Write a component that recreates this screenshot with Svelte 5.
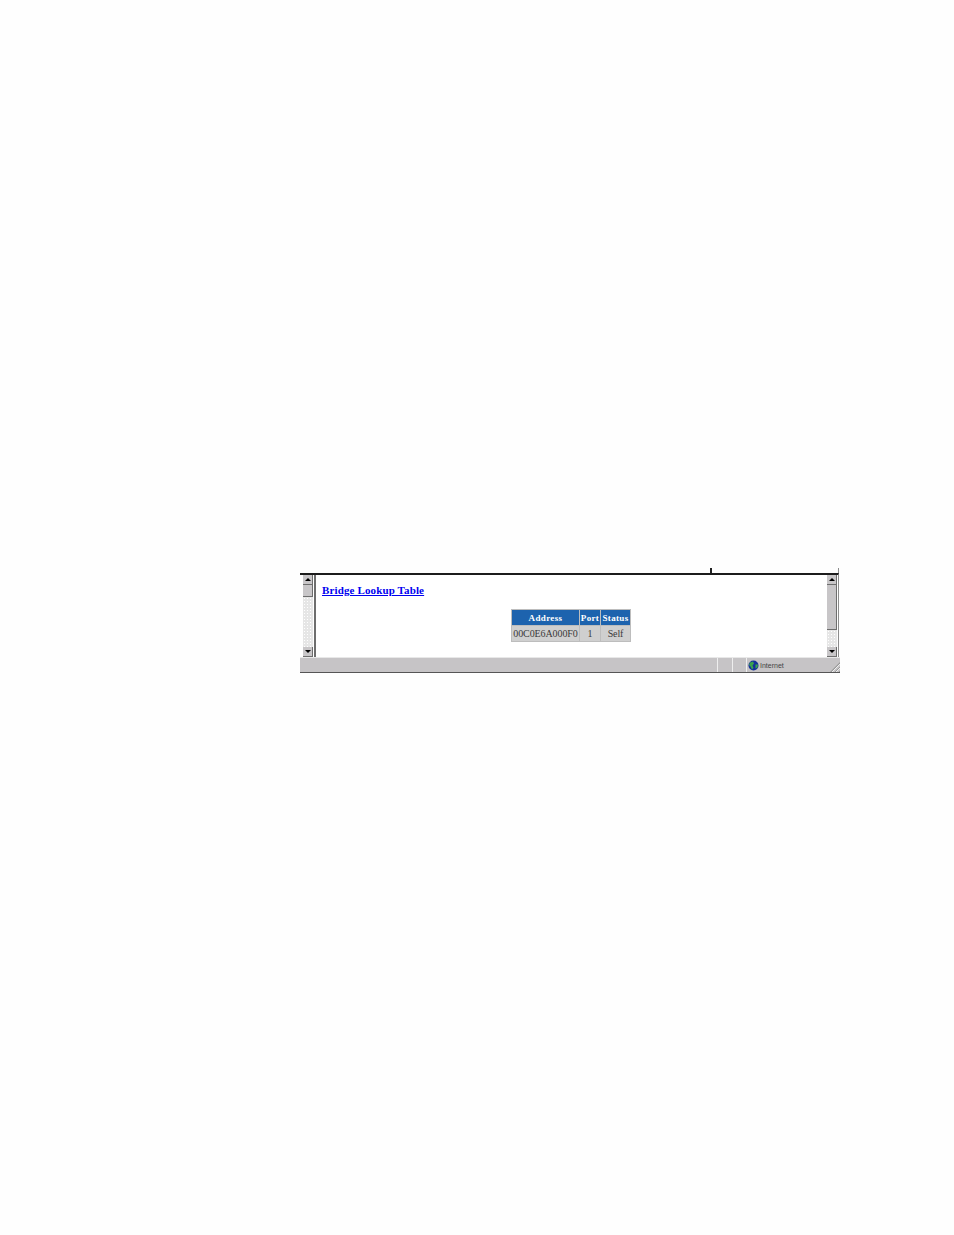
<script>
  const rows = [{ address: "00C0E6A000F0", port: "1", status: "Self" }];
</script>

<div class="page">
  <div class="shot">
    <div class="top"><span class="tick"></span></div>
    <div class="middle">
      <div class="scroll left">
        <span class="btn"><i class="up"></i></span>
        <span class="thumb small"></span>
        <span class="track"></span>
        <span class="btn"><i class="down"></i></span>
      </div>
      <div class="content">
        <a class="title" href="#top">Bridge Lookup Table</a>
        <table>
          <thead>
            <tr><th class="addr">Address</th><th class="port">Port</th><th class="state">Status</th></tr>
          </thead>
          <tbody>
            {#each rows as row}
              <tr><td>{row.address}</td><td>{row.port}</td><td>{row.status}</td></tr>
            {/each}
          </tbody>
        </table>
      </div>
      <div class="scroll right">
        <span class="btn"><i class="up"></i></span>
        <span class="thumb big"></span>
        <span class="track"></span>
        <span class="btn"><i class="down"></i></span>
      </div>
    </div>
    <div class="status">
      <span class="cell grow"></span>
      <span class="cell w15"></span>
      <span class="cell w14"></span>
      <span class="cell zone">
        <svg width="11" height="11" viewBox="0 0 11 11">
          <circle cx="5.5" cy="5.5" r="5" fill="#14309a" />
          <path d="M2 2.5 5 1.5 6 3.5 4.5 5.5 5.5 8 4 9.5 2.5 6.5 1 5ZM7.5 4.5 10 4.5 9.5 7.5 7.5 8.5Z" fill="#3aa24e" />
        </svg>
        <span>Internet</span>
      </span>
      <span class="grip"></span>
    </div>
  </div>
</div>

<style>
  :global(body) {
    margin: 0;
    background: #fefefe;
  }
  .page {
    height: 1235px;
    padding: 568px 0 0 300px;
    box-sizing: border-box;
  }
  .shot {
    width: 540px;
    height: 105px;
    display: flex;
    flex-direction: column;
    position: relative;
    font-family: "Liberation Serif", serif;
  }
  .top {
    height: 5px;
    margin-right: 1px;
    border-right: 1px solid #8c8c8c;
    position: relative;
  }
  .tick {
    position: absolute;
    left: 410px;
    top: 0;
    width: 2px;
    height: 5px;
    background: #222;
  }
  .middle {
    height: 84px;
    margin-right: 1px;
    display: flex;
    border-top: 2px solid #1c1c1c;
    border-right: 1px solid #8c8c8c;
    box-sizing: border-box;
    background: #fff;
  }
  .scroll {
    display: flex;
    flex-direction: column;
    width: 10px;
    flex: none;
  }
  .scroll.left {
    margin-left: 3px;
  }
  .scroll.right {
    margin-right: 1px;
  }
  .btn {
    height: 10px;
    flex: none;
    background: #c8c6c8;
    border-bottom: 1px solid #6e6e6e;
    border-right: 1px solid #6e6e6e;
    box-sizing: border-box;
    display: flex;
    align-items: center;
    justify-content: center;
  }
  .btn i {
    display: block;
    width: 0;
    height: 0;
    border-left: 3px solid transparent;
    border-right: 3px solid transparent;
  }
  .up {
    border-bottom: 3px solid #000;
  }
  .down {
    border-top: 3px solid #000;
  }
  .thumb {
    flex: none;
    background: #c8c6c8;
    border-bottom: 1px solid #6e6e6e;
    border-right: 1px solid #6e6e6e;
    box-sizing: border-box;
  }
  .thumb.small {
    height: 12px;
  }
  .thumb.big {
    height: 45px;
  }
  .track {
    flex: 1;
    background-color: #e6e6e6;
    background-image: radial-gradient(#fff 0.8px, transparent 1px);
    background-size: 3px 3px;
  }
  .content {
    flex: 1;
    padding: 9px 0 0 6px;
    border-left: 2px solid #6e6e6e;
    margin-left: 1px;
    display: flex;
    flex-direction: column;
  }
  .title {
    align-self: flex-start;
    font-size: 11px;
    font-weight: 700;
    line-height: 13px;
    letter-spacing: 0.13px;
    color: #0000f0;
  }
  table {
    margin: 12px 0 0 189px;
    border-collapse: separate;
    border-spacing: 1px;
    background: #bdbdbd;
    font-size: 9px;
    line-height: 15px;
    align-self: flex-start;
    table-layout: fixed;
    width: 120px;
  }
  th {
    background: #1d63ae;
    color: #fff;
    font-weight: 700;
    padding: 1px 0 0;
    line-height: 14px;
    letter-spacing: 0.35px;
    text-align: center;
  }
  th.addr {
    width: 67px;
  }
  th.port {
    width: 20px;
  }
  td {
    background: #cfcfcf;
    color: #3a3a3a;
    padding: 0;
    font-size: 10px;
    font-weight: 400;
    text-align: center;
    letter-spacing: -0.1px;
  }
  .status {
    height: 16px;
    display: flex;
    background: #c6c4c6;
    border-top: 1px solid #e8e8e8;
    border-bottom: 1px solid #555;
    box-sizing: border-box;
    position: relative;
    font-family: "Liberation Sans", sans-serif;
    font-size: 7px;
    color: #444;
  }
  .cell {
    border-right: 1px solid #eee;
    box-sizing: border-box;
    flex: none;
  }
  .cell.grow {
    flex: 1;
  }
  .cell.w15 {
    width: 15px;
  }
  .cell.w14 {
    width: 14px;
  }
  .zone {
    width: 93px;
    display: flex;
    align-items: center;
    gap: 1px;
    padding-left: 1px;
    border-right: none;
  }
  .grip {
    position: absolute;
    right: 0;
    bottom: 0;
    width: 10px;
    height: 10px;
    background: repeating-linear-gradient(135deg, transparent 0 1px, #999 1px 2px, #eee 2px 3px);
    clip-path: polygon(100% 0, 100% 100%, 0 100%);
  }
</style>
